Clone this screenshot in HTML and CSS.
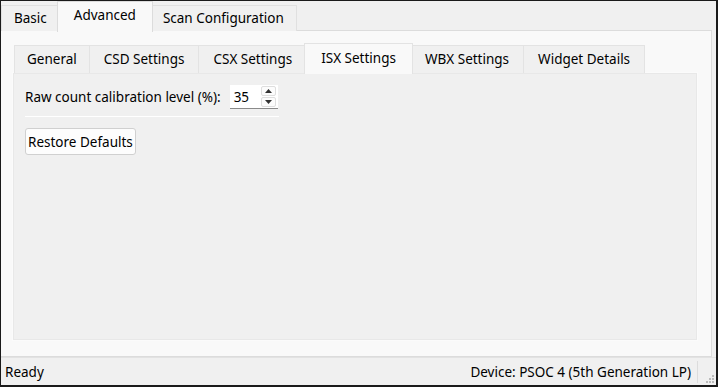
FILE: index.html
```html
<!DOCTYPE html>
<html lang="en">
<head>
  <meta charset="UTF-8">
  <title>Advanced - ISX Settings</title>
  <link rel="stylesheet" href="styles.css">
</head>
<body>
  <div class="window">
    <!-- top level tabs -->
    <div class="tabbar outer-tabs">
      <div class="tab">Basic</div>
      <div class="tab active">Advanced</div>
      <div class="tab">Scan Configuration</div>
    </div>

    <div class="outer-pane">
      <!-- second level tabs -->
      <div class="tabbar inner-tabs">
        <div class="tab">General</div>
        <div class="tab">CSD Settings</div>
        <div class="tab">CSX Settings</div>
        <div class="tab active">ISX Settings</div>
        <div class="tab">WBX Settings</div>
        <div class="tab">Widget Details</div>
      </div>

      <div class="inner-pane">
        <div class="field-row">
          <label class="field-label">Raw count calibration level (%):</label>
          <div class="spinbox">
            <span class="spin-value">35</span>
            <div class="spin-buttons">
              <div class="spin-btn">
                <svg width="7" height="4" viewBox="0 0 7 4"><path d="M0 4 L3.5 0 L7 4 Z" fill="#333"/></svg>
              </div>
              <div class="spin-btn">
                <svg width="7" height="4" viewBox="0 0 7 4"><path d="M0 0 L7 0 L3.5 4 Z" fill="#333"/></svg>
              </div>
            </div>
          </div>
        </div>
        <div class="separator"></div>
        <button class="btn">Restore Defaults</button>
      </div>
    </div>

    <div class="statusbar">
      <span class="status-left">Ready</span>
      <span class="status-right">Device: PSOC 4 (5th Generation LP)</span>
      <div class="grip">
        <svg width="10" height="10" viewBox="0 0 10 10">
          <rect x="8" y="2" width="2" height="2" fill="#bbb"/>
          <rect x="5" y="5" width="2" height="2" fill="#bbb"/>
          <rect x="8" y="5" width="2" height="2" fill="#bbb"/>
          <rect x="2" y="8" width="2" height="2" fill="#bbb"/>
          <rect x="5" y="8" width="2" height="2" fill="#bbb"/>
          <rect x="8" y="8" width="2" height="2" fill="#bbb"/>
        </svg>
      </div>
    </div>
  </div>
</body>
</html>
```

FILE: styles.css
```css
* {
  box-sizing: border-box;
}
body {
  margin: 0;
  background-color: #f0f0f0;
  font-family: 'Noto Sans', 'Open Sans', sans-serif;
  font-size: 13.5px;
  color: #000;
}
.window {
  width: 718px;
  height: 387px;
  border: 1px solid #1a1a1a;
  border-right-width: 2px;
  border-bottom-width: 2px;
  background-color: #f0f0f0;
  display: flex;
  flex-direction: column;
  overflow: hidden;
}

/* tabs */
.tabbar {
  display: flex;
  align-items: flex-end;
  position: relative;
  z-index: 1;
}
.tab {
  height: 26px;
  line-height: 25px;
  padding: 0 12px;
  border: 1px solid #e0e0e0;
  border-bottom: none;
  margin-left: -1px;
  background-color: #f0f0f0;
  white-space: nowrap;
}
.tab.active {
  height: 30px;
  line-height: 27px;
  padding: 0 16px;
  margin: 0 -2px 0 -3px;
  background-color: #f9f9f9;
  border-color: #dcdcdc;
  z-index: 2;
  position: relative;
}
.outer-tabs {
  height: 30px;
  margin-bottom: -1px;
}
.outer-tabs .tab:first-child {
  margin-left: 0;
}
.outer-tabs .tab.active {
  margin-bottom: -1px;
  height: 31px;
}

/* outer pane */
.outer-pane {
  height: 327px;
  width: 711px;
  background-color: #f9f9f9;
  border: 1px solid #dcdcdc;
  border-left: none;
  padding: 13px 13px 0 11px;
}
.inner-tabs {
  height: 29px;
  padding-left: 3px;
  margin-bottom: -1px;
}
.inner-tabs .tab {
  height: 28px;
  line-height: 27px;
  padding: 0 14px;
  background-color: #f0f0f0;
  border-color: #e3e3e3;
}
.inner-tabs .tab:first-child {
  padding: 0 12px;
}
.inner-tabs .tab.active {
  height: 31px;
  line-height: 29px;
  padding: 0 16px;
  background-color: #f9f9f9;
  margin-bottom: -1px;
}
.inner-pane {
  height: 269px;
  width: 686px;
  border: 1px solid #fbfbfb;
  outline: 1px solid #e8e8e8;
  outline-offset: -2px;
  background-color: #f0f0f0;
  padding: 11px 12px;
}

/* form */
.field-row {
  display: flex;
  align-items: center;
  height: 25px;
}
.field-label {
  margin-right: 9px;
}
.spinbox {
  display: flex;
  align-items: stretch;
  width: 48px;
  height: 24px;
  background-color: #fff;
  border-bottom: 1px solid #8a8a8a;
}
.spin-value {
  flex: 1;
  padding-left: 4px;
  line-height: 24px;
}
.spin-buttons {
  display: flex;
  flex-direction: column;
  width: 17px;
  padding: 1px 2px 1px 0;
  gap: 1px;
}
.spin-btn {
  flex: 1;
  display: flex;
  align-items: center;
  justify-content: center;
  border: 1px solid #dedede;
  border-radius: 2px;
  background-color: #fcfcfc;
}
.separator {
  width: 254px;
  height: 1px;
  margin: 7px 0 11px;
  background-color: #fff;
}
.btn {
  font: inherit;
  color: #000;
  height: 27px;
  padding: 0 2px;
  background-color: #fdfdfd;
  border: 1px solid #d0d0d0;
  border-radius: 3px;
}

/* status bar */
.statusbar {
  flex: 1;
  display: flex;
  align-items: center;
  border-top: 1px solid #e2e2e2;
  padding-left: 4px;
  position: relative;
}
.status-left {
  flex: 1;
}
.status-right {
  padding-right: 6px;
  border-right: 1px solid #dcdcdc;
  line-height: 22px;
}
.grip {
  width: 18px;
  align-self: flex-end;
  display: flex;
  justify-content: flex-end;
  padding: 0 2px 2px 0;
}
```
